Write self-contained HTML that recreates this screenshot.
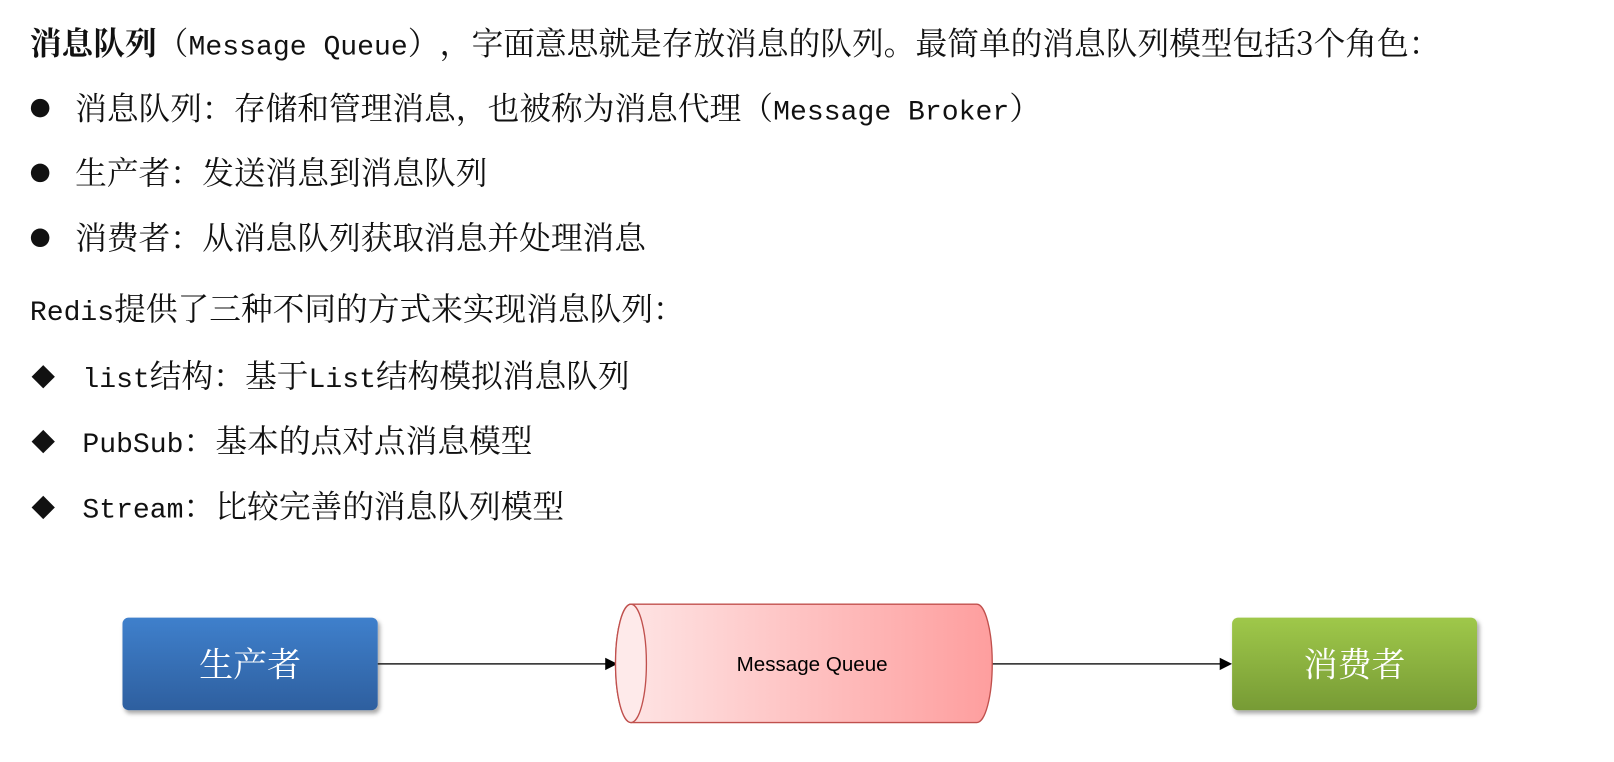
<!DOCTYPE html>
<html><head><meta charset="utf-8"><style>
body{margin:0;width:1614px;height:761px;background:#fff;overflow:hidden;}
#w{position:relative;width:1568px;height:740px;transform:scale(1.0293);transform-origin:0 0;font-family:"Noto Serif CJK SC","Liberation Serif",serif;color:#111;text-spacing-trim:space-all;}
.l{position:absolute;left:0;height:40px;line-height:40px;font-size:30.8px;white-space:nowrap;}
.p{display:inline-block;width:31px;}
.m{font-family:"Liberation Mono",monospace;font-size:27.3px;}
.dot{position:absolute;width:18px;height:18px;border-radius:50%;background:#111;}
.dia{position:absolute;width:16px;height:16px;background:#111;transform:rotate(45deg);}
.box{position:absolute;border-radius:6px;color:#fff;text-align:center;font-size:33px;box-shadow:2px 3px 4px rgba(0,0,0,.35);font-family:"Noto Serif CJK SC",serif;}
</style></head><body><div id="w">
<div class="l" style="top:20px;left:29px"><b>消息队列</b><span class="p">（</span><span class="m">Message Queue</span><span class="p">）</span><span class="p">，</span>字面意思就是存放消息的队列<span class="p">。</span>最简单的消息队列模型包括3个角色<span class="p">：</span></div>
<div class="dot" style="left:30px;top:96px"></div>
<div class="l" style="top:83px;left:73px">消息队列<span class="p">：</span>存储和管理消息<span class="p">，</span>也被称为消息代理<span class="p">（</span><span class="m">Message Broker</span><span class="p">）</span></div>
<div class="dot" style="left:30px;top:159px"></div>
<div class="l" style="top:146px;left:73px">生产者<span class="p">：</span>发送消息到消息队列</div>
<div class="dot" style="left:30px;top:222px"></div>
<div class="l" style="top:209px;left:73px">消费者<span class="p">：</span>从消息队列获取消息并处理消息</div>
<div class="l" style="top:278px;left:29px"><span class="m">Redis</span>提供了三种不同的方式来实现消息队列<span class="p">：</span></div>
<div class="dia" style="left:34px;top:358px"></div>
<div class="l" style="top:343px;left:80px"><span class="m">list</span>结构<span class="p">：</span>基于<span class="m">List</span>结构模拟消息队列</div>
<div class="dia" style="left:34px;top:421px"></div>
<div class="l" style="top:406px;left:80px"><span class="m">PubSub</span><span class="p">：</span>基本的点对点消息模型</div>
<div class="dia" style="left:34px;top:485px"></div>
<div class="l" style="top:470px;left:80px"><span class="m">Stream</span><span class="p">：</span>比较完善的消息队列模型</div>

<div class="box" style="left:119px;top:600px;width:248px;height:90px;line-height:88px;background:linear-gradient(#3f80cc,#2e5f9f);">生产者</div>
<div class="box" style="left:1197px;top:600px;width:238px;height:90px;line-height:88px;background:linear-gradient(#9fc84a,#779b35);">消费者</div>
<svg style="position:absolute;left:0;top:0" width="1568" height="740">
<defs><linearGradient id="g" x1="0" x2="1"><stop offset="0" stop-color="#fee6e6"/><stop offset="1" stop-color="#fe9e9e"/></linearGradient></defs>
<line x1="367" y1="645" x2="590" y2="645" stroke="#222" stroke-width="1.5"/>
<polygon points="588,639 600,645 588,651" fill="#000"/>
<line x1="964" y1="645" x2="1186" y2="645" stroke="#222" stroke-width="1.5"/>
<polygon points="1185,639 1197,645 1185,651" fill="#000"/>
<path d="M613,587 L949,587 A15,57.5 0 0 1 949,702 L613,702 A15,57.5 0 0 1 613,587 Z" fill="url(#g)" stroke="#c0504d" stroke-width="1.3"/>
<ellipse cx="613" cy="644.5" rx="15" ry="57.5" fill="#feeaea" stroke="#c0504d" stroke-width="1.3"/>
<text x="789" y="652" text-anchor="middle" font-family="Liberation Sans, sans-serif" font-size="20" fill="#000">Message Queue</text>
</svg>
</div></body></html>
